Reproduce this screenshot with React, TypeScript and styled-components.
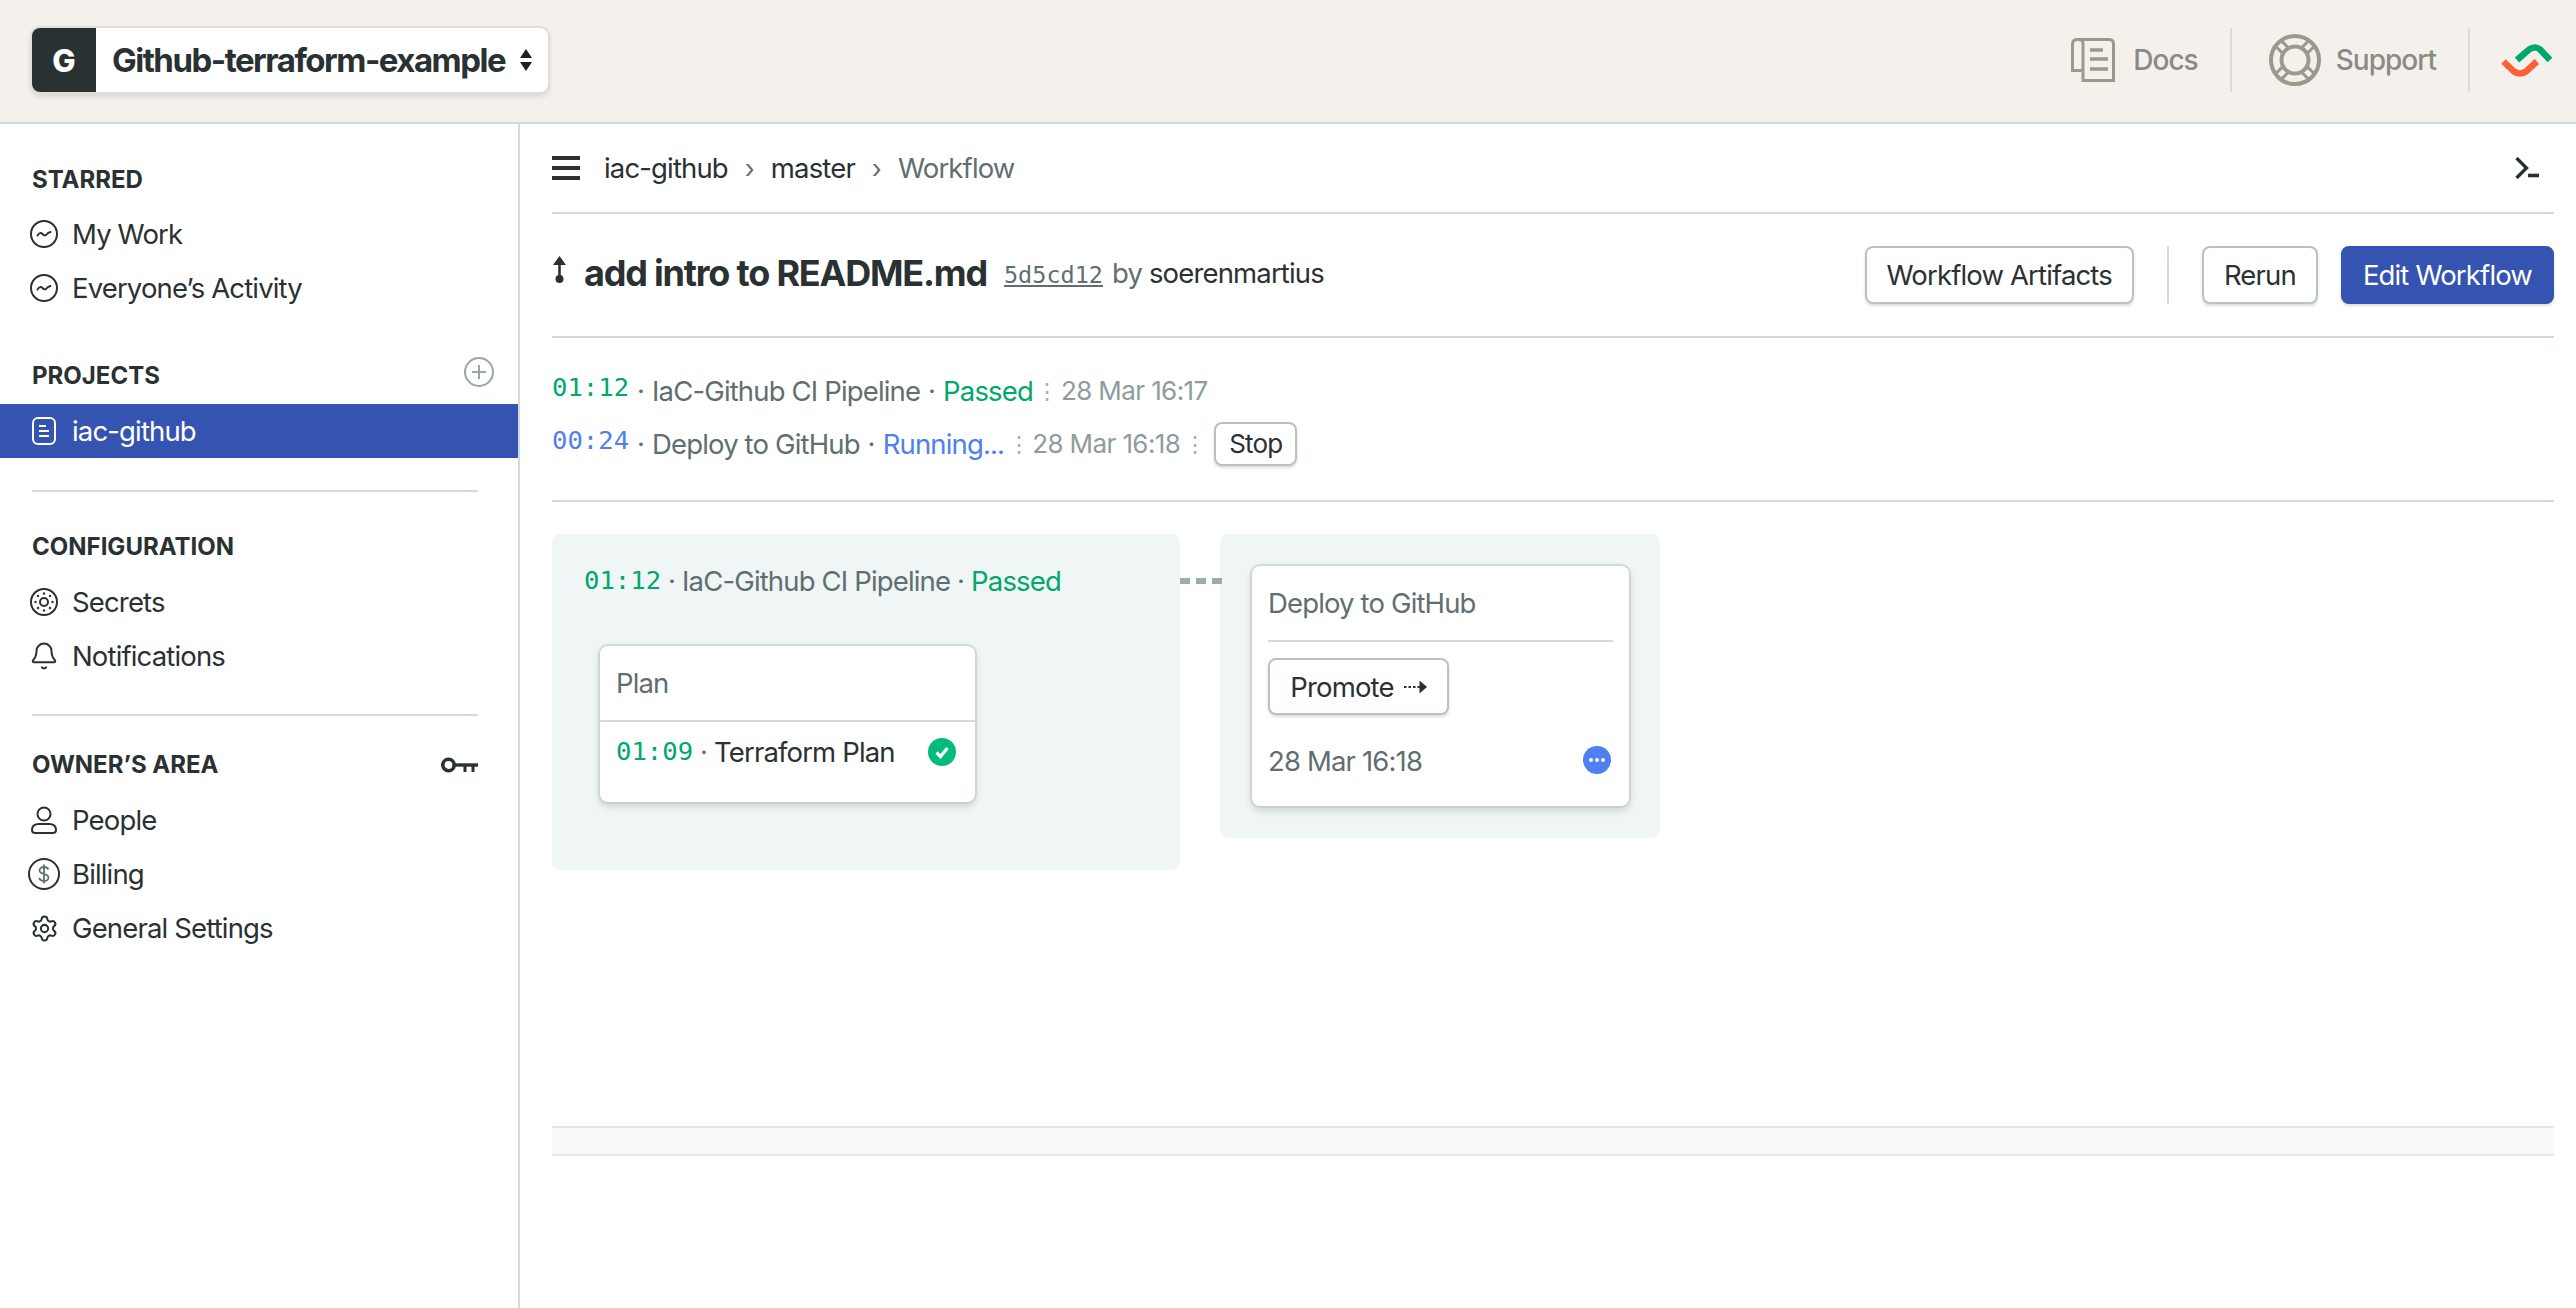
import React from 'react'
import styled, { createGlobalStyle } from 'styled-components'
import { Bell, Settings } from 'lucide-react'

const dark = '#2a3133'
const gray = '#5f6f70'
const line = '#d3dcda'
const indigo = '#3553b0'
const green = '#00a86b'
const blue = '#4f7ff0'

const GlobalStyle = createGlobalStyle`
  * {
    box-sizing: border-box;
  }

  body {
    margin: 0;
    background: #fff;
    color: ${dark};
    font-family: Inter, 'Noto Sans', sans-serif;
    font-size: 27.5px;
    letter-spacing: -0.85px;
  }
`

const TrendIcon = () => (
  <svg width='28' height='28' viewBox='0 0 28 28' fill='none' stroke={dark} strokeWidth='2'>
    <circle cx='14' cy='14' r='13' />
    <path d='M7.5 15.5 Q10 11.5 12.5 14 T16.5 14.5 T20.5 12' strokeLinecap='round' />
  </svg>
)

const ProjectIcon = () => (
  <svg width='24' height='28' viewBox='0 0 24 28' fill='none' stroke='#fff' strokeWidth='2'>
    <rect x='1' y='1' width='22' height='26' rx='5' />
    <path d='M7 9h7M7 14h10M7 19h10' />
  </svg>
)

const SecretsIcon = () => (
  <svg width='28' height='28' viewBox='0 0 28 28' fill='none' stroke={dark} strokeWidth='2'>
    <circle cx='14' cy='14' r='13' />
    <circle cx='14' cy='14' r='4' />
    <g fill={dark} stroke='none'>
      <circle cx='14' cy='5.5' r='1.2' />
      <circle cx='14' cy='22.5' r='1.2' />
      <circle cx='5.5' cy='14' r='1.2' />
      <circle cx='22.5' cy='14' r='1.2' />
      <circle cx='8' cy='8' r='1.2' />
      <circle cx='20' cy='8' r='1.2' />
      <circle cx='8' cy='20' r='1.2' />
      <circle cx='20' cy='20' r='1.2' />
    </g>
  </svg>
)

const PersonIcon = () => (
  <svg width='28' height='28' viewBox='0 0 28 28' fill='none' stroke={dark} strokeWidth='2'>
    <circle cx='14' cy='8' r='6.5' />
    <path d='M2 24 C2 20 5 18 9 18 H19 C23 18 26 20 26 24 C26 26 25 27 23 27 H5 C3 27 2 26 2 24 Z' />
  </svg>
)

const BillingIcon = () => (
  <svg width='32' height='32' viewBox='0 0 32 32' fill='none' strokeWidth='2'>
    <circle cx='16' cy='16' r='15' stroke={dark} />
    <path
      d='M20.5 11.5 C19.5 9.5 17.5 9 16 9 C13.5 9 11.5 10.5 11.5 12.5 C11.5 17 20.5 15 20.5 19.5 C20.5 21.5 18.5 23 16 23 C14 23 12 22 11 20 M16 6.5 V25.5'
      stroke={gray}
      strokeWidth='1.8'
    />
  </svg>
)

const PlusIcon = () => (
  <svg width='30' height='30' viewBox='0 0 30 30' fill='none' stroke='#9aa5a5' strokeWidth='2'>
    <circle cx='15' cy='15' r='14' />
    <path d='M15 8v14M8 15h14' />
  </svg>
)

const KeyIcon = () => (
  <svg width='37' height='16' viewBox='0 0 37 16' fill='none' stroke={dark}>
    <circle cx='7.5' cy='8' r='5.7' strokeWidth='3.6' />
    <path d='M13 8h24' strokeWidth='3.4' />
    <path d='M24 9v6M32 9v6' strokeWidth='3' />
  </svg>
)

const DocsIcon = () => (
  <svg width='44' height='44' viewBox='0 0 44 44' fill='none' stroke='#9d988b' strokeWidth='3'>
    <path d='M12 32.5H1.5V6C1.5 3 3.5 1.5 6.5 1.5H38C41 1.5 42.5 3 42.5 6V42.5H12V5C12 3 10 1.5 7 1.5' />
    <path d='M19 12h13M19 21h18M19 31h18' strokeWidth='3.6' />
  </svg>
)

const SupportIcon = () => (
  <svg width='52' height='52' viewBox='0 0 52 52' fill='none' stroke='#9d988b'>
    <circle cx='26' cy='26' r='24' strokeWidth='4' />
    <circle cx='26' cy='26' r='13.500' strokeWidth='4' />
    <path
      d='M38 19.600L45.100 12.500M32.400 14L39.500 6.900M14 19.600L6.900 12.500M19.600 14L12.500 6.900M38 32.400L45.100 39.500M32.400 38L39.500 45.100M14 32.400L6.900 39.500M19.600 38L12.500 45.100'
      strokeWidth='3'
    />
  </svg>
)

const Logo = () => (
  <svg width='52' height='34' viewBox='22 18 52 34' fill='none' strokeWidth='6.5'>
    <path d='M38 35 L50 24.5 Q56 20.5 61 24.5 L71 35' stroke={green} />
    <path d='M24.5 36.5 L35 46.5 Q41 50.5 47 46.5 L58 36.5' stroke='#fa6138' />
  </svg>
)

const TerminalIcon = () => (
  <svg width='24' height='22' viewBox='0 0 24 22' fill='none' stroke={dark}>
    <path d='M1.5 1 L11.5 11 L1.5 21' strokeWidth='3.4' />
    <path d='M13 18.5h11' strokeWidth='3.6' />
  </svg>
)

const CommitIcon = () => (
  <svg width='15' height='28' viewBox='0 0 15 28' fill={dark} stroke={dark}>
    <path d='M7.5 0 L14 9 H1 Z' stroke='none' />
    <path d='M7.5 6v18' strokeWidth='2.6' />
    <circle cx='7.5' cy='23' r='4' stroke='none' />
  </svg>
)

const CheckIcon = () => (
  <svg width='28' height='28' viewBox='0 0 28 28'>
    <circle cx='14' cy='14' r='14' fill='#03bb7d' />
    <path d='M8.5 14.5 L12.5 18.5 L19.5 10' fill='none' stroke='#fff' strokeWidth='3.2' />
  </svg>
)

const PendingIcon = () => (
  <svg width='28' height='28' viewBox='0 0 28 28'>
    <circle cx='14' cy='14' r='14' fill={blue} />
    <g fill='#fff'>
      <circle cx='8' cy='14' r='2' />
      <circle cx='14' cy='14' r='2' />
      <circle cx='20' cy='14' r='2' />
    </g>
  </svg>
)

const PromoteArrow = () => (
  <svg width='23' height='14' viewBox='0 0 23 14' fill={dark}>
    <path d='M0 6h2.5v2H0zM4.5 6H7v2H4.5zM9 6h2.5v2H9zM13.500 6H16v2h-2.500z' />
    <path d='M15.500 0.500 L23 7 L15.500 13.500 Z' />
  </svg>
)

const SwitchArrows = () => (
  <svg width='12' height='22' viewBox='0 0 12 22' fill='#1b1f20'>
    <path d='M6 0 L12 9 H0 Z' />
    <path d='M6 22 L12 13 H0 Z' />
  </svg>
)

const App = () => {
  return (
    <Page>
      <GlobalStyle />
      <TopBar>
        <Switcher>
          <Avatar>G</Avatar>
          <OrgName>Github-terraform-example</OrgName>
          <SwitchArrows />
        </Switcher>
        <TopLinks>
          <TopLink $gap={18}>
            <DocsIcon />
            Docs
          </TopLink>
          <TopDivider />
          <TopLink $gap={15} $inset={6}>
            <SupportIcon />
            Support
          </TopLink>
          <TopDivider />
          <Logo />
        </TopLinks>
      </TopBar>

      <Body>
        <Sidebar>
          <NavHeading $top={40} $bottom={11}>STARRED</NavHeading>
          <NavItem>
            <NavIcon><TrendIcon /></NavIcon>
            My Work
          </NavItem>
          <NavItem>
            <NavIcon><TrendIcon /></NavIcon>
            Everyone’s Activity
          </NavItem>

          <NavHeading $top={45} $bottom={12}>
            PROJECTS
            <PlusSlot><PlusIcon /></PlusSlot>
          </NavHeading>
          <NavItem $active>
            <NavIcon><ProjectIcon /></NavIcon>
            iac-github
          </NavItem>
          <NavDivider $top={32} />

          <NavHeading $top={39} $bottom={12}>CONFIGURATION</NavHeading>
          <NavItem>
            <NavIcon><SecretsIcon /></NavIcon>
            Secrets
          </NavItem>
          <NavItem>
            <NavIcon><Bell size={30} strokeWidth={1.6} color={dark} /></NavIcon>
            Notifications
          </NavItem>
          <NavDivider $top={31} />

          <NavHeading $top={33} $bottom={12}>
            OWNER’S AREA
            <KeyIcon />
          </NavHeading>
          <NavItem>
            <NavIcon><PersonIcon /></NavIcon>
            People
          </NavItem>
          <NavItem>
            <NavIcon><BillingIcon /></NavIcon>
            Billing
          </NavItem>
          <NavItem>
            <NavIcon><Settings size={29} strokeWidth={1.7} color={dark} /></NavIcon>
            General Settings
          </NavItem>
        </Sidebar>

        <Main>
          <CrumbBar>
            <Burger>
              <span />
              <span />
              <span />
            </Burger>
            <Crumb>iac-github</Crumb>
            <CrumbSep>›</CrumbSep>
            <Crumb>master</Crumb>
            <CrumbSep>›</CrumbSep>
            <Crumb $current>Workflow</Crumb>
            <TerminalSlot><TerminalIcon /></TerminalSlot>
          </CrumbBar>

          <TitleBar>
            <CommitSlot><CommitIcon /></CommitSlot>
            <Title>add intro to README.md</Title>
            <CommitHash>5d5cd12</CommitHash>
            <Author>
              <em>by</em> soerenmartius
            </Author>
            <Actions>
              <Button>Workflow Artifacts</Button>
              <ActionDivider />
              <Button>Rerun</Button>
              <PrimaryButton>Edit Workflow</PrimaryButton>
            </Actions>
          </TitleBar>

          <Summary>
            <SummaryRow>
              <Time $color={green} $lift={8}>01:12</Time>
              <Dot>·</Dot>
              <PipelineName>IaC-Github CI Pipeline</PipelineName>
              <Dot>·</Dot>
              <Status $color={green}>Passed</Status>
              <Kebab>⋮</Kebab>
              <DateText>28 Mar 16:17</DateText>
            </SummaryRow>
            <SummaryRow>
              <Time $color={blue} $lift={8}>00:24</Time>
              <Dot>·</Dot>
              <PipelineName>Deploy to GitHub</PipelineName>
              <Dot>·</Dot>
              <Status $color={blue}>Running...</Status>
              <Kebab>⋮</Kebab>
              <DateText>28 Mar 16:18</DateText>
              <Kebab>⋮</Kebab>
              <StopButton>Stop</StopButton>
            </SummaryRow>
          </Summary>

          <Stages>
            <Stage $width={628} $height={336}>
              <StageHeader>
                <Time $color={green} $lift={3}>01:12</Time>
                <StageDot>·</StageDot>
                <PipelineName>IaC-Github CI Pipeline</PipelineName>
                <StageDot>·</StageDot>
                <Status $color={green}>Passed</Status>
              </StageHeader>
              <PlanCard>
                <CardTitle>Plan</CardTitle>
                <JobRow>
                  <Time $color={green} $lift={2}>01:09</Time>
                  <StageDot>·</StageDot>
                  <JobName>Terraform Plan</JobName>
                  <JobStatus><CheckIcon /></JobStatus>
                </JobRow>
              </PlanCard>
            </Stage>
            <Connector />
            <Stage $width={440} $height={304}>
              <DeployCard>
                <DeployTitle>Deploy to GitHub</DeployTitle>
                <PromoteButton>
                  Promote
                  <PromoteArrow />
                </PromoteButton>
                <DeployFooter>
                  <span>28 Mar 16:18</span>
                  <PendingIcon />
                </DeployFooter>
              </DeployCard>
            </Stage>
          </Stages>

          <Band />
        </Main>
      </Body>
    </Page>
  )
}

const Page = styled.div`
  height: 1308px;
  overflow: hidden;
  display: flex;
  flex-direction: column;
`

const TopBar = styled.header`
  flex: 0 0 124px;
  display: flex;
  align-items: center;
  justify-content: space-between;
  padding: 0 23px 2px 32px;
  background: #f4f1ec;
  border-bottom: 2px solid ${line};
`

const Switcher = styled.div`
  width: 516px;
  height: 64px;
  display: flex;
  align-items: center;
  background: #fff;
  border-radius: 8px;
  box-shadow: 0 0 0 2px #e2dfda, 0 3px 6px rgba(0, 0, 0, 0.18);
  overflow: hidden;
`

const Avatar = styled.div`
  width: 64px;
  height: 64px;
  display: flex;
  align-items: center;
  justify-content: center;
  background: ${dark};
  color: #fff;
  font-size: 31px;
  font-weight: 800;
  letter-spacing: 0;
`

const OrgName = styled.div`
  width: 424px;
  padding-left: 16px;
  font-size: 33px;
  font-weight: 700;
  letter-spacing: -1.5px;
  white-space: nowrap;
`

const TopLinks = styled.div`
  display: flex;
  align-items: center;
`

const TopLink = styled.div<{ $gap: number; $inset?: number }>`
  display: flex;
  align-items: center;
  gap: ${(p) => p.$gap}px;
  margin-left: ${(p) => p.$inset ?? 0}px;
  color: #8b8a84;
  font-size: 28px;
  font-weight: 500;
  letter-spacing: -1px;
`

const TopDivider = styled.div`
  width: 2px;
  height: 64px;
  margin: 0 31px 0 32px;
  background: #dedbd5;
`

const Body = styled.div`
  flex: 1;
  display: flex;
`

const Sidebar = styled.nav`
  flex: 0 0 520px;
  border-right: 2px solid ${line};
`

const NavHeading = styled.h3<{ $top: number; $bottom: number }>`
  height: 32px;
  margin: ${(p) => p.$top}px 0 ${(p) => p.$bottom}px;
  padding: 0 40px 0 32px;
  display: flex;
  align-items: center;
  justify-content: space-between;
  font-size: 24px;
  font-weight: 700;
  letter-spacing: 0;
  line-height: 32px;
`

const PlusSlot = styled.span`
  display: flex;
  margin: -8px -16px 0 0;
`

const NavItem = styled.div<{ $active?: boolean }>`
  height: 54px;
  padding-left: 28px;
  display: flex;
  align-items: center;
  gap: 12px;
  background: ${(p) => (p.$active ? indigo : 'transparent')};
  color: ${(p) => (p.$active ? '#fff' : dark)};
`

const NavIcon = styled.span`
  width: 32px;
  display: flex;
  justify-content: center;
`

const NavDivider = styled.hr<{ $top: number }>`
  height: 2px;
  margin: ${(p) => p.$top}px 40px 0 32px;
  border: 0;
  background: ${line};
`

const Main = styled.main`
  flex: 1;
  min-width: 0;
  padding: 0 22px 0 32px;
`

const CrumbBar = styled.div`
  height: 90px;
  display: flex;
  align-items: center;
  border-bottom: 2px solid ${line};
`

const Burger = styled.div`
  width: 28px;
  height: 24px;
  margin-right: 24px;
  display: flex;
  flex-direction: column;
  justify-content: space-between;

  span {
    height: 4px;
    background: ${dark};
  }
`

const Crumb = styled.span<{ $current?: boolean }>`
  color: ${(p) => (p.$current ? gray : dark)};
`

const CrumbSep = styled.span`
  width: 43px;
  text-align: center;
  color: ${gray};
  font-size: 26px;
`

const TerminalSlot = styled.span`
  display: flex;
  margin: 0 15px 0 auto;
`

const TitleBar = styled.div`
  height: 124px;
  display: flex;
  align-items: center;
  border-bottom: 2px solid ${line};
`

const CommitSlot = styled.span`
  display: flex;
  width: 32px;
  margin-bottom: 10px;
`

const Title = styled.h1`
  margin: 0 0 4px;
  font-size: 36px;
  font-weight: 700;
  letter-spacing: -1.2px;
  white-space: nowrap;
`

const CommitHash = styled.span`
  margin: 0 9px 0 17px;
  color: ${gray};
  font-family: 'DejaVu Sans Mono', monospace;
  font-size: 23.5px;
  letter-spacing: 0;
  text-decoration: underline;
`

const Author = styled.span`
  margin-bottom: 4px;

  em {
    color: ${gray};
    font-style: normal;
  }
`

const Actions = styled.div`
  margin-left: auto;
  display: flex;
  align-items: center;
`

const Button = styled.button`
  height: 58px;
  padding: 0 20px;
  background: #fff;
  border: 2px solid #b7c3c3;
  border-radius: 8px;
  box-shadow: 0 2px 3px rgba(0, 0, 0, 0.14);
  color: ${dark};
  font-family: inherit;
  font-size: 27.5px;
  letter-spacing: inherit;
`

const ActionDivider = styled.div`
  width: 2px;
  height: 58px;
  margin: 0 33px;
  background: ${line};
`

const PrimaryButton = styled(Button)`
  margin-left: 23px;
  background: ${indigo};
  border-color: ${indigo};
  color: #fff;
`

const Summary = styled.div`
  height: 164px;
  padding-top: 26px;
  border-bottom: 2px solid ${line};
`

const SummaryRow = styled.div`
  height: 53px;
  display: flex;
  align-items: center;
  white-space: nowrap;
`

const Time = styled.span<{ $color: string; $lift: number }>`
  margin-bottom: ${(p) => p.$lift}px;
  color: ${(p) => p.$color};
  font-family: 'DejaVu Sans Mono', monospace;
  font-size: 25.6px;
  letter-spacing: 0;
`

const Dot = styled.span`
  width: 23px;
  text-align: center;
  color: ${gray};
`

const StageDot = styled(Dot)`
  width: 21px;
`

const PipelineName = styled.span`
  color: ${gray};
`

const Status = styled.span<{ $color: string }>`
  color: ${(p) => p.$color};
`

const Kebab = styled.span`
  width: 28px;
  text-align: center;
  color: #a4b0b0;
  font-size: 22px;
`

const DateText = styled.span`
  color: #8d9c9c;
  font-size: 26px;
  letter-spacing: -0.6px;
`

const StopButton = styled(Button)`
  height: 44px;
  margin-left: 6px;
  padding: 0 13px;
  font-size: 26px;
`

const Stages = styled.div`
  height: 624px;
  padding-top: 32px;
  display: flex;
  align-items: flex-start;
`

const Stage = styled.section<{ $width: number; $height: number }>`
  width: ${(p) => p.$width}px;
  height: ${(p) => p.$height}px;
  background: #f0f5f5;
  border-radius: 8px;
`

const Connector = styled.div`
  position: relative;
  width: 42px;
  height: 6px;
  margin: 44px -2px 0 0;
  background: repeating-linear-gradient(90deg, #9dabab 0 10px, transparent 10px 16px);
`

const StageHeader = styled.div`
  height: 94px;
  padding-left: 32px;
  display: flex;
  align-items: center;
  white-space: nowrap;
`

const Card = styled.div`
  background: #fff;
  border-radius: 8px;
  box-shadow: 0 0 0 2px rgba(190, 202, 202, 0.55), 0 4px 8px rgba(0, 0, 0, 0.16);
`

const PlanCard = styled(Card)`
  width: 375px;
  height: 156px;
  margin: 18px 0 0 48px;
`

const CardTitle = styled.div`
  height: 76px;
  padding-left: 16px;
  display: flex;
  align-items: center;
  border-bottom: 2px solid ${line};
  color: ${gray};
`

const JobRow = styled.div`
  padding: 13px 0 0 16px;
  display: flex;
  align-items: center;
`

const JobName = styled.span`
  color: ${dark};
`

const JobStatus = styled.span`
  display: flex;
  margin: 0 19px 0 auto;
`

const DeployCard = styled(Card)`
  width: 377px;
  height: 240px;
  margin: 32px 0 0 32px;
  padding: 0 16px;
  display: flex;
  flex-direction: column;
  align-items: flex-start;
`

const DeployTitle = styled.div`
  width: 100%;
  height: 76px;
  display: flex;
  align-items: center;
  border-bottom: 2px solid ${line};
  color: ${gray};
`

const PromoteButton = styled(Button)`
  width: 181px;
  height: 57px;
  margin-top: 16px;
  padding: 0;
  display: flex;
  align-items: center;
  justify-content: center;
  gap: 10px;
`

const DeployFooter = styled.div`
  width: 100%;
  margin-top: 29px;
  display: flex;
  align-items: center;
  justify-content: space-between;
  color: ${gray};

  svg {
    margin: 0 2px 3px 0;
  }
`

const Band = styled.div`
  height: 30px;
  background: #f9f9f9;
  border-top: 2px solid #e6e6e6;
  border-bottom: 2px solid #e9e9e9;
`

export default App
